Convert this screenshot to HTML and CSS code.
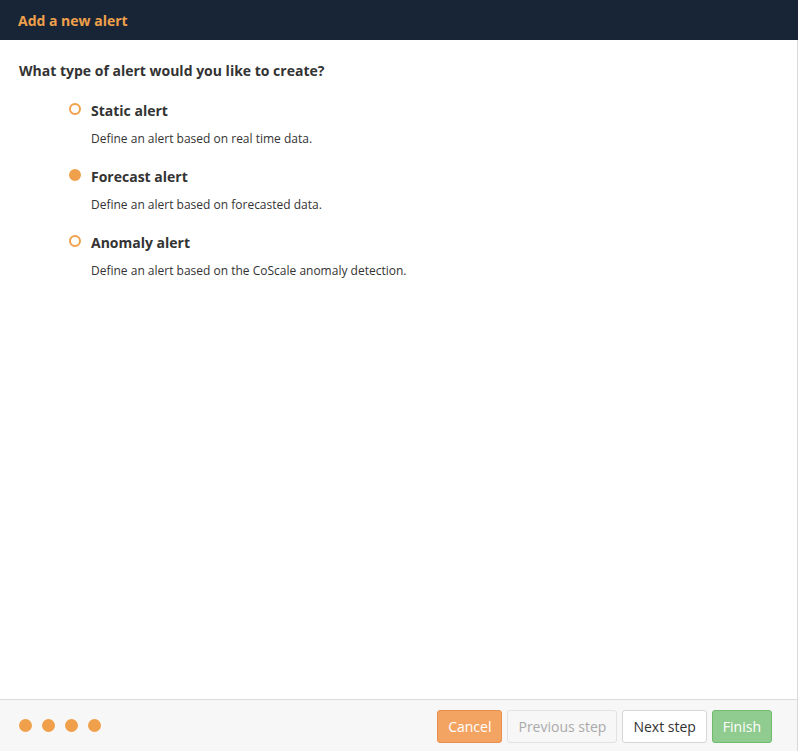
FILE: index.html
```html
<!DOCTYPE html>
<html>
<head>
<meta charset="utf-8">
<link rel="stylesheet" href="styles.css">
</head>
<body>
<div class="modal">
  <div class="header"><span class="title">Add a new alert</span></div>
  <div class="body">
    <div class="question">What type of alert would you like to create?</div>
    <div class="options">
      <div class="option">
        <div class="opt-head"><span class="radio"></span><span class="opt-title">Static alert</span></div>
        <div class="opt-desc">Define an alert based on real time data.</div>
      </div>
      <div class="option">
        <div class="opt-head"><span class="radio checked"></span><span class="opt-title">Forecast alert</span></div>
        <div class="opt-desc">Define an alert based on forecasted data.</div>
      </div>
      <div class="option">
        <div class="opt-head"><span class="radio"></span><span class="opt-title">Anomaly alert</span></div>
        <div class="opt-desc">Define an alert based on the CoScale anomaly detection.</div>
      </div>
    </div>
  </div>
  <div class="footer">
    <div class="dots"><span class="dot"></span><span class="dot"></span><span class="dot"></span><span class="dot"></span></div>
    <div class="buttons">
      <button class="btn btn-cancel">Cancel</button>
      <button class="btn btn-disabled">Previous step</button>
      <button class="btn btn-default">Next step</button>
      <button class="btn btn-finish">Finish</button>
    </div>
  </div>
</div>
</body>
</html>
```
FILE: styles.css
```css
* { box-sizing: border-box; }
html, body { margin: 0; padding: 0; height: 100%; }
body {
  font-family: "Open Sans", "Liberation Sans", sans-serif;
  color: #333;
  background: #fff;
}
.modal {
  width: 798px;
  height: 751px;
  display: flex;
  flex-direction: column;
  border-right: 1px solid #d9d9d9;
}
.header {
  height: 40px;
  background: #172536;
  display: flex;
  align-items: center;
  padding-left: 18px;
  margin-right: -1px;
}
.title {
  color: #f0a04b;
  font-weight: 700;
  font-size: 14px;
}
.body {
  flex: 1;
  padding: 21px 19px 0;
}
.question {
  font-weight: 700;
  font-size: 14px;
  line-height: 20px;
  color: #333;
}
.options {
  padding-left: 50px;
  margin-top: 19px;
}
.option { height: 66px; }
.opt-head {
  display: flex;
  align-items: center;
  height: 20px;
}
.radio {
  width: 12px;
  height: 12px;
  border-radius: 50%;
  border: 2px solid #f0a04b;
  margin-right: 10px;
  margin-top: -2px;
}
.radio.checked { background: #f0a04b; }
.opt-title {
  font-weight: 700;
  font-size: 14px;
  color: #333;
}
.opt-desc {
  font-size: 12px;
  line-height: 17px;
  margin-top: 10px;
  padding-left: 22px;
  color: #333;
}
.footer {
  height: 52px;
  border-top: 1px solid #dcdcdc;
  background: #f7f7f7;
  display: flex;
  align-items: center;
  justify-content: space-between;
  padding: 2px 25px 0 19px;
}
.dots { display: flex; gap: 10px; margin-top: -2px; }
.dot {
  width: 13px;
  height: 13px;
  border-radius: 50%;
  background: #f0a04b;
}
.buttons { display: flex; gap: 5px; }
.btn {
  font-family: "Open Sans", "Liberation Sans", sans-serif;
  font-size: 14px;
  height: 33px;
  padding: 0 10px;
  border-radius: 3px;
  border: 1px solid #ddd;
  background: #fff;
  color: #333;
}
.btn-cancel { background: #f4a462; border-color: #e88f4c; color: #fff; }
.btn-disabled { background: #f7f7f7; color: #aaa; border-color: #e2e2e2; }
.btn-default { background: #fff; color: #333; border-color: #d6d6d6; }
.btn-finish { background: #90cb8f; border-color: #6fbc6e; color: #fff; }
```
